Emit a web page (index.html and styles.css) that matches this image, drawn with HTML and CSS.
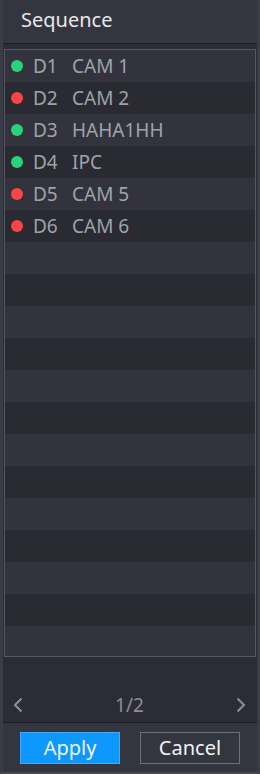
FILE: index.html
```html
<!DOCTYPE html>
<html lang="en">

<head>
    <meta charset="UTF-8">
    <meta name="viewport" content="width=device-width, initial-scale=1.0">
    <title>Sequence</title>
    <link rel="stylesheet" href="styles.css">
</head>

<body>
    <div class="panel">
        <div class="header">Sequence</div>
        <div class="content">
            <div class="list">
                <div class="row"><span class="dot on"></span><span class="ch">D1</span><span class="name">CAM 1</span></div>
                <div class="row"><span class="dot off"></span><span class="ch">D2</span><span class="name">CAM 2</span></div>
                <div class="row"><span class="dot on"></span><span class="ch">D3</span><span class="name">HAHA1HH</span></div>
                <div class="row"><span class="dot on"></span><span class="ch">D4</span><span class="name">IPC</span></div>
                <div class="row"><span class="dot off"></span><span class="ch">D5</span><span class="name">CAM 5</span></div>
                <div class="row"><span class="dot off"></span><span class="ch">D6</span><span class="name">CAM 6</span></div>
                <div class="row"></div>
                <div class="row"></div>
                <div class="row"></div>
                <div class="row"></div>
                <div class="row"></div>
                <div class="row"></div>
                <div class="row"></div>
                <div class="row"></div>
                <div class="row"></div>
                <div class="row"></div>
                <div class="row"></div>
                <div class="row"></div>
                <div class="row"></div>
            </div>
            <div class="pager">
                <svg class="arrow" width="10" height="16" viewBox="0 0 10 16">
                    <polyline points="8.5,1.5 2,8 8.5,14.5" fill="none" stroke="#8c8e95" stroke-width="2" />
                </svg>
                <span class="page">1/2</span>
                <svg class="arrow" width="10" height="16" viewBox="0 0 10 16">
                    <polyline points="1.5,1.5 8,8 1.5,14.5" fill="none" stroke="#8c8e95" stroke-width="2" />
                </svg>
            </div>
        </div>
        <div class="footer">
            <button class="btn apply">Apply</button>
            <button class="btn cancel">Cancel</button>
        </div>
    </div>
</body>

</html>
```

FILE: styles.css
```css
body {
    margin: 0;
    background: #2b2c35;
    font-family: "Noto Sans", "DejaVu Sans", sans-serif;
}

.panel {
    width: 260px;
    height: 774px;
    box-sizing: border-box;
    border-left: 3px solid #3a3d46;
    border-right: 3px solid #3a3d46;
    border-bottom: 2px solid #464952;
    background: #2b2c35;
    display: flex;
    flex-direction: column;
}

.header {
    height: 43px;
    line-height: 40px;
    padding-left: 18px;
    background: #34363f;
    border-bottom: 1px solid #1c1d22;
    color: #e8e8ea;
    font-size: 20px;
}

.content {
    flex: 1;
    padding: 5px 1px 0 1px;
    display: flex;
    flex-direction: column;
}

.list {
    height: 608px;
    flex-shrink: 0;
    box-sizing: border-box;
    border: 1px solid #55585f;
    overflow: hidden;
}

.row {
    height: 32px;
    display: flex;
    align-items: center;
    background: #32333c;
    color: #a0a2a8;
    font-size: 19px;
}

.row:nth-child(even) {
    background: #292a32;
}

.dot {
    width: 12px;
    height: 12px;
    border-radius: 50%;
    margin-left: 6px;
}

.dot.on {
    background: #27d47a;
}

.dot.off {
    background: #fa4545;
}

.ch {
    margin-left: 10px;
    width: 39px;
}

.pager {
    flex: 1;
    display: flex;
    align-items: center;
    justify-content: space-between;
    padding: 30px 10px 0 9px;
    color: #8c8e95;
    font-size: 19px;
}

.footer {
    height: 50px;
    flex-shrink: 0;
    box-sizing: border-box;
    background: #34363f;
    border-top: 1px solid #1c1d22;
    display: flex;
    align-items: flex-start;
    padding: 9px 0 0 17px;
    gap: 20px;
}

.btn {
    width: 100px;
    height: 32px;
    font-family: "Noto Sans", "DejaVu Sans", sans-serif;
    font-size: 20px;
    line-height: 28px;
    color: #f2f2f2;
    padding: 0;
}

.btn.apply {
    background: #0d98fd;
    border: 1px solid #4aa6f8;
}

.btn.cancel {
    background: transparent;
    border: 1px solid #6e7077;
}
```
